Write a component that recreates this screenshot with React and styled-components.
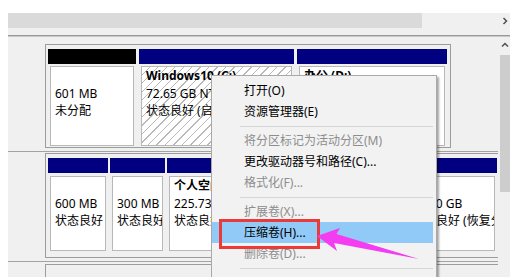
import React from "react";
import styled, { createGlobalStyle } from "styled-components";

const FONT = `"Noto Sans", "Noto Sans CJK SC", sans-serif`;

const Global = createGlobalStyle`
  html, body { margin: 0; padding: 0; background: #fff; }
  #root { width: 516px; height: 277px; overflow: hidden; }
  * { box-sizing: border-box; }
`;

const Screen = styled.div`
  position: relative;
  width: 516px;
  height: 277px;
  overflow: hidden;
  background: #fff;
  display: flex;
  flex-direction: column;
  font-family: ${FONT};
  font-size: 12px;
  color: #000;
`;

const TopBand = styled.div`
  flex: none;
  height: 13px;
`;

const Band = styled.div`
  flex: none;
  margin-left: 8px;
  width: 502px;
  height: ${(p) => p.$h}px;
  background: #f0f0f0;
  display: flex;
`;

const HThumb = styled.div`
  width: 414px;
  background: #dadada;
`;

const ArrowCell = styled.div`
  flex: none;
  margin-left: auto;
  width: 12px;
  height: ${(p) => p.$h || 15}px;
  padding-left: 2px;
  display: flex;
  align-items: center;
  justify-content: center;
`;

const Rule = styled.div`
  flex: none;
  margin-left: 8px;
  width: 502px;
  height: 2px;
  border-top: 1px solid #9a9a9a;
  border-bottom: 1px solid #c9c9c9;
`;

const Body = styled.div`
  flex: 1;
  min-height: 0;
  margin-left: 8px;
  display: flex;
`;

const Panel = styled.div`
  flex: none;
  width: 490px;
  background: #f0f0f0;
  overflow: hidden;
  display: flex;
  flex-direction: column;
`;

const VScroll = styled.div`
  flex: none;
  width: 12px;
  background: #f0f0f0;
  display: flex;
  flex-direction: column;
`;

const VThumb = styled.div`
  margin: 2px 0 0 2px;
  width: 10px;
  height: 137px;
  background: #cdcdcd;
`;

const DiskRow = styled.div`
  flex: none;
  display: flex;
  padding: ${(p) => p.$pt}px 0 3px 0;
  border-bottom: ${(p) => (p.$last ? "none" : "1px solid #a3a3a3")};
`;

const LabelCol = styled.div`
  flex: none;
  width: 37px;
`;

const DiskBox = styled.div`
  flex: none;
  display: flex;
  gap: ${(p) => p.$gap}px;
  border: 1px solid #9c9c9c;
  padding: 4px 3px ${(p) => p.$pb}px 2px;
  min-height: ${(p) => p.$minH || 0}px;
  width: ${(p) => (p.$w ? `${p.$w}px` : "auto")};
`;

const Part = styled.div`
  flex: none;
  width: ${(p) => p.$w}px;
  display: flex;
  flex-direction: column;
`;

const PartHead = styled.div`
  height: 15px;
  background: ${(p) => p.$color};
`;

const PartBody = styled.div`
  margin: ${(p) => p.$gap}px 2px 0;
  height: ${(p) => p.$h}px;
  border: 1px solid #b8b8b8;
  background: ${(p) =>
    p.$hatched
      ? "repeating-linear-gradient(135deg, #fff 0px, #fff 5px, #b9b9b9 5px, #b9b9b9 6px)"
      : "#fff"};
  padding: 0 0 0 4px;
  line-height: 17.5px;
  white-space: nowrap;
  overflow: hidden;
`;

const Line = styled.div`
  font-weight: ${(p) => (p.$bold ? 700 : 400)};
`;

const Menu = styled.div`
  position: absolute;
  left: 211px;
  top: 75px;
  width: 226px;
  height: 230px;
  background: #f2f2f2;
  border: 1px solid #a9a9a9;
  box-shadow: 2px 2px 2px rgba(0, 0, 0, 0.35);
  padding: 4px 3px 0 0;
  font-family: ${FONT};
  font-size: 12px;
`;

const MenuItem = styled.div`
  height: 21px;
  line-height: 21px;
  padding-left: 32px;
  white-space: nowrap;
  color: ${(p) => (p.$disabled ? "#8d8d8d" : "#000")};
  background: ${(p) => (p.$active ? "#91c9f7" : "transparent")};
`;

const MenuSep = styled.div`
  height: 8px;
  display: flex;
  align-items: center;
  padding-left: 28px;
  &::after {
    content: "";
    flex: 1;
    height: 1px;
    background: #d5d5d5;
  }
`;

const Highlight = styled.div`
  position: absolute;
  left: 219px;
  top: 219px;
  width: 101px;
  height: 30px;
  border: 3px solid #ea3a3a;
`;

const ArrowSvg = styled.svg`
  position: absolute;
  left: 310px;
  top: 220px;
`;

const Chevron = ({ dir }) => (
  <svg width="8" height="8" viewBox="0 0 8 8">
    <polyline
      points={dir === "right" ? "2.5,1 5.5,4 2.5,7" : "1,5.5 4,2.5 7,5.5"}
      fill="none"
      stroke="#505050"
      strokeWidth="1.5"
    />
  </svg>
);

const rows = [
  {
    pt: 7,
    gap: 3,
    pb: 1,
    bodyGap: 2,
    bodyH: 80,
    parts: [
      { w: 88, color: "#000", lines: ["", "601 MB", "未分配"] },
      {
        w: 155,
        color: "#000080",
        hatched: true,
        lines: ["Windows10 (C:)", "72.65 GB NTFS", "状态良好 (启动, 页面文件, 故障转储, 主分区)"],
      },
      { w: 150, color: "#000080", lines: ["办公 (D:)", "150.00 GB NTFS", "状态良好 (主分区)"] },
    ],
  },
  {
    pt: 1,
    gap: 2,
    pb: 6,
    bodyGap: 3,
    bodyH: 75,
    parts: [
      { w: 60, color: "#000080", lines: ["", "600 MB", "状态良好 (EFI 系统分区)"] },
      { w: 55, color: "#000080", lines: ["", "300 MB", "状态良好 (OEM 分区)"] },
      { w: 236, color: "#000080", lines: ["个人空间 (E:)", "225.73 GB NTFS", "状态良好 (主分区)"] },
      { w: 92, color: "#000080", lines: ["", "10.00 GB", "状态良好 (恢复分区)"] },
    ],
  },
];

const menu = [
  { t: "打开(O)" },
  { t: "资源管理器(E)" },
  { sep: true },
  { t: "将分区标记为活动分区(M)", d: true },
  { t: "更改驱动器号和路径(C)..." },
  { t: "格式化(F)...", d: true },
  { sep: true },
  { t: "扩展卷(X)...", d: true },
  { t: "压缩卷(H)...", a: true },
  { t: "删除卷(D)...", d: true },
  { sep: true },
];

export default function App() {
  return (
    <>
      <Global />
      <Screen>
        <TopBand />
        <Band $h={15}>
          <HThumb />
          <ArrowCell>
            <Chevron dir="right" />
          </ArrowCell>
        </Band>
        <Band $h={7} />
        <Rule />
        <Body>
          <Panel>
            {rows.map((r, i) => (
              <DiskRow key={i} $pt={r.pt}>
                <LabelCol />
                <DiskBox $gap={r.gap} $pb={r.pb}>
                  {r.parts.map((p, j) => (
                    <Part key={j} $w={p.w}>
                      <PartHead $color={p.color} />
                      <PartBody $gap={r.bodyGap} $h={r.bodyH} $hatched={p.hatched}>
                        {p.lines.map((l, k) => (
                          <Line key={k} $bold={k === 0}>
                            {l || "\u00a0"}
                          </Line>
                        ))}
                      </PartBody>
                    </Part>
                  ))}
                </DiskBox>
              </DiskRow>
            ))}
            <DiskRow $pt={2} $last>
              <LabelCol />
              <DiskBox $gap={3} $pb={0} $minH={30} $w={460} />
            </DiskRow>
          </Panel>
          <VScroll>
            <ArrowCell $h={16}>
              <Chevron dir="up" />
            </ArrowCell>
            <VThumb />
          </VScroll>
        </Body>

        <Menu>
          {menu.map((m, i) =>
            m.sep ? (
              <MenuSep key={i} />
            ) : (
              <MenuItem key={i} $disabled={m.d} $active={m.a}>
                {m.t}
              </MenuItem>
            )
          )}
        </Menu>
        <Highlight />
        <ArrowSvg width="115" height="45" viewBox="310 220 115 45">
          <polygon
            points="317,236 340,228 336.5,234 419,259 334,243 337,251"
            fill="#f43cf0"
          />
        </ArrowSvg>
      </Screen>
    </>
  );
}
